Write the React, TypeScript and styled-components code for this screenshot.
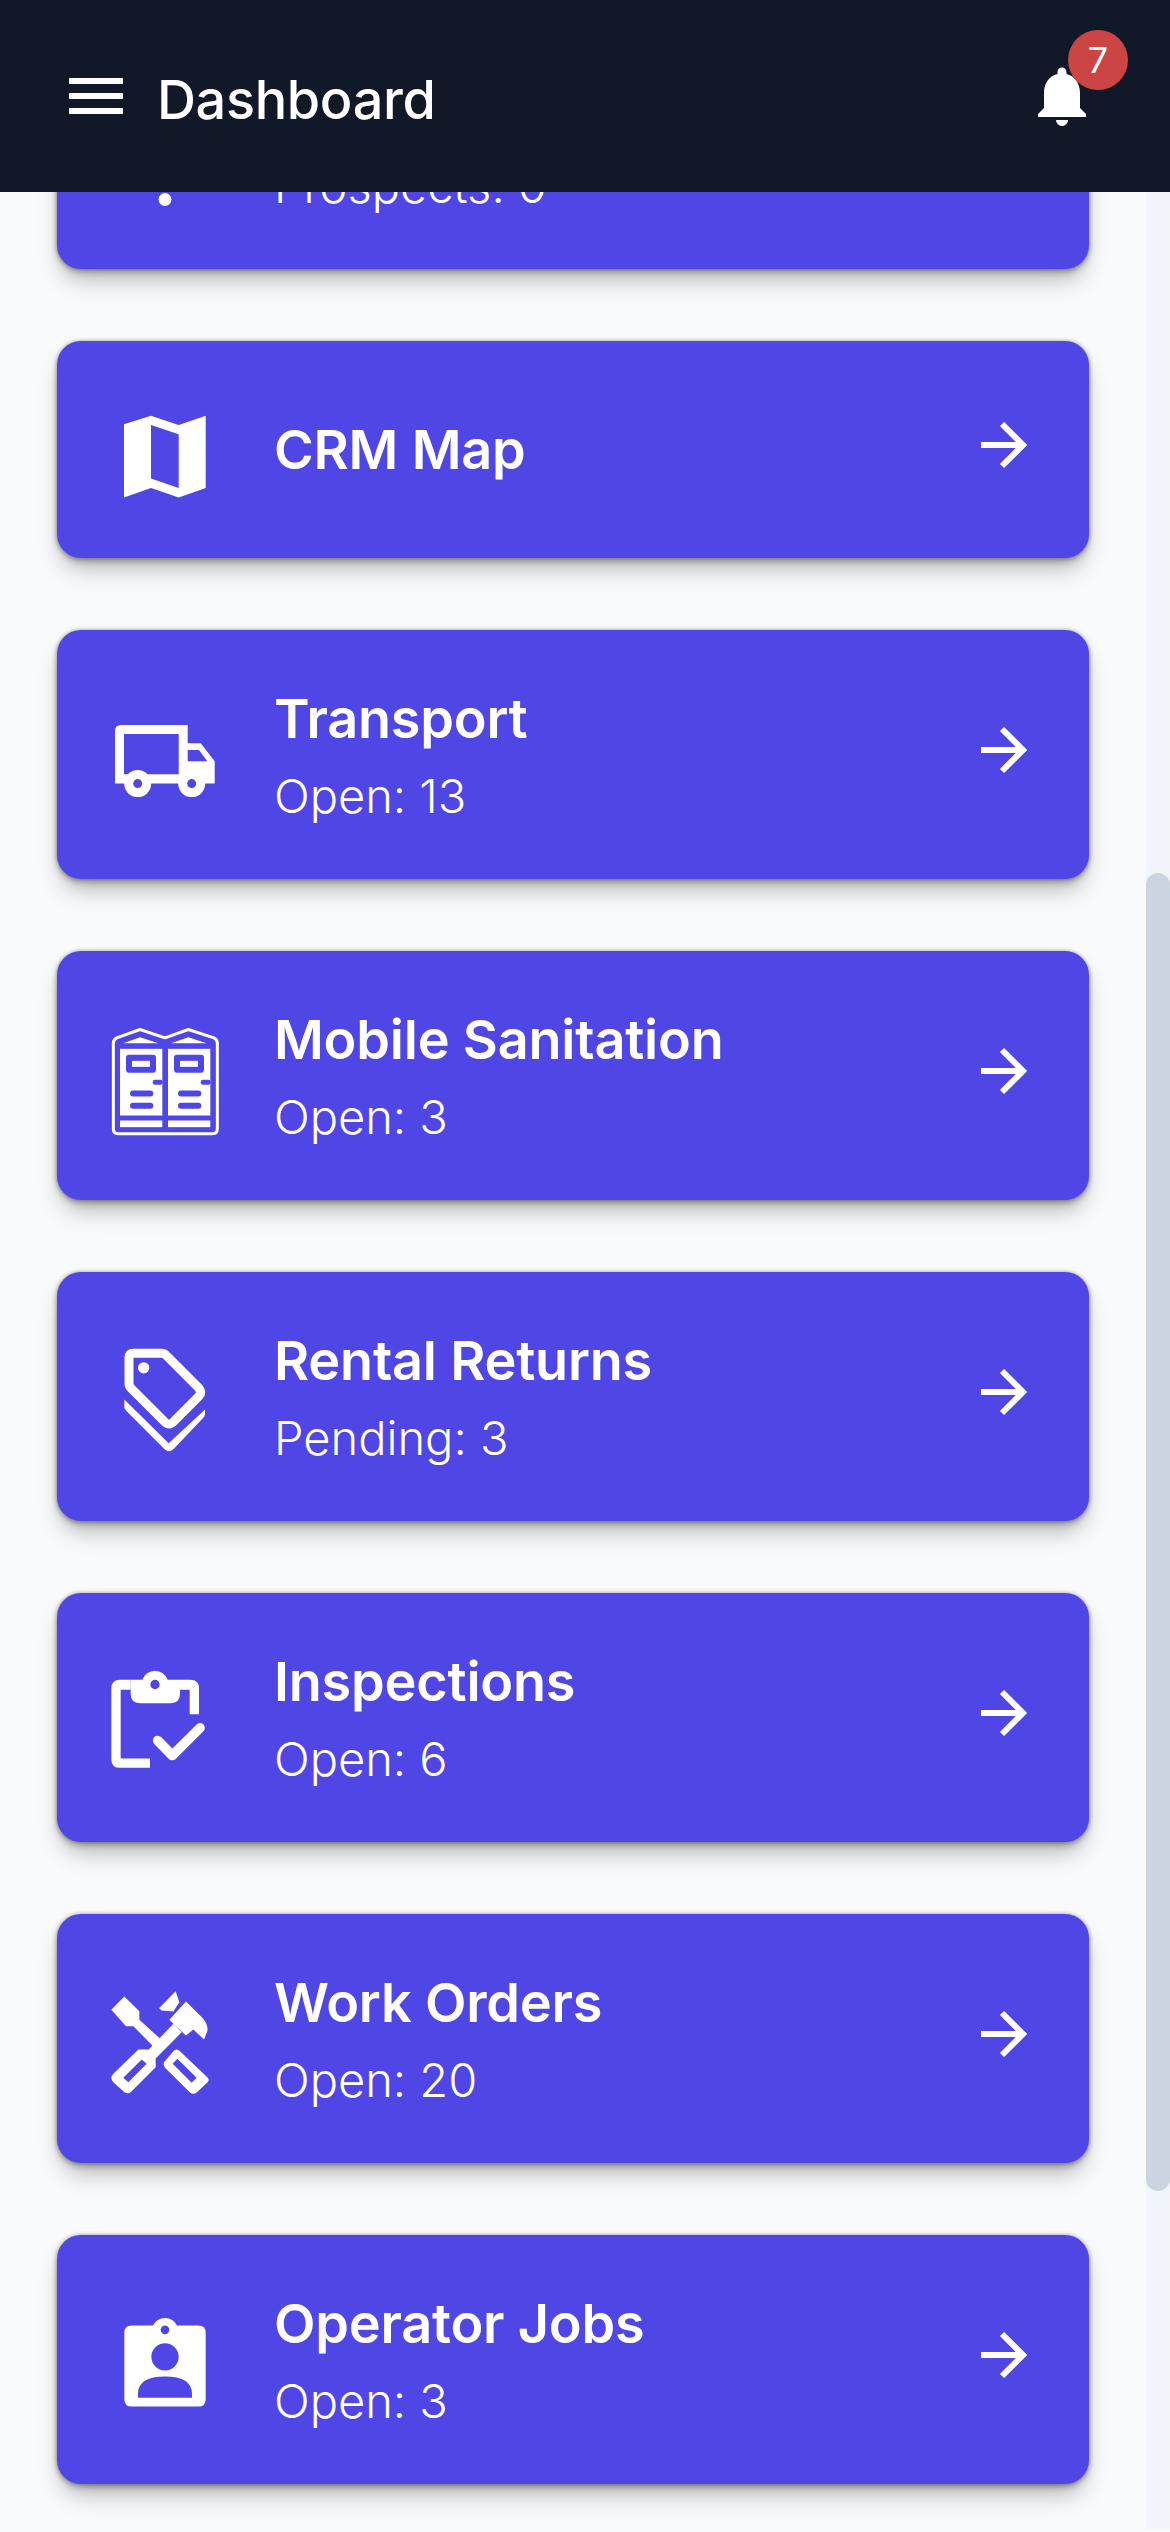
import React from "react";
import styled, { createGlobalStyle } from "styled-components";
import { ArrowRight } from "lucide-react";
import { MdNotifications } from "react-icons/md";

const CARD = "#4f46e5";

const GlobalStyle = createGlobalStyle`
 html, body {
  margin: 0;
  padding: 0;
  background: #f8fafc;
 }
 body {
  font-family: Inter, "Liberation Sans", sans-serif;
  color: #fff;
 }
`;

const Page = styled.div`
 width: 1170px;
 height: 2532px;
 overflow: hidden;
 background: #f8fafc;
`;

const Header = styled.header`
 position: relative;
 z-index: 2;
 height: 192px;
 background: #111827;
 display: flex;
 align-items: center;
 justify-content: space-between;
 padding: 0 72px 0 60px;
`;

const HeaderLeft = styled.div`
 display: flex;
 align-items: center;
 gap: 25px;
`;

const HeaderTitle = styled.h1`
 margin: 8px 0 0;
 font-size: 54px;
 line-height: 72px;
 font-weight: 500;
 letter-spacing: -0.35px;
`;

const MenuIcon = styled.svg`
 display: block;
 width: 72px;
 height: 72px;
`;

const BellWrap = styled.div`
 position: relative;
 width: 72px;
 height: 72px;
 svg {
  display: block;
 }
`;

const Badge = styled.span`
 position: absolute;
 top: -30px;
 left: 42px;
 width: 60px;
 height: 60px;
 border-radius: 50%;
 background: #cd4444;
 display: flex;
 align-items: center;
 justify-content: center;
 font-size: 36px;
 line-height: 1;
`;

const Body = styled.div`
 display: flex;
 height: 2337px;
 overflow: hidden;
`;

const List = styled.main`
 flex: 1;
 min-width: 0;
 display: flex;
 flex-direction: column;
 gap: 72px;
 padding: 0 57px;
 margin-top: -172px;
`;

const Card = styled.a`
 box-sizing: border-box;
 flex: none;
 min-height: 217px;
 display: flex;
 align-items: center;
 padding: 47.5px 51px 47.5px 48px;
 border-radius: 24px;
 background: ${CARD};
 box-shadow: 0 0 4px rgba(0, 0, 0, 0.3), 0 3px 6px rgba(0, 0, 0, 0.25),
  0 15px 24px -6px rgba(0, 0, 0, 0.3);
`;

const IconBox = styled.svg`
 display: block;
 flex: none;
 width: 120px;
 height: 120px;
 margin: 6px 0 -6px;
 fill: #fff;
`;

const CardText = styled.div`
 flex: 1;
 min-width: 0;
 margin-left: 49px;
`;

const CardTitle = styled.div`
 font-size: 54px;
 line-height: 82px;
 font-weight: 600;
 letter-spacing: -0.2px;
`;

const CardSub = styled.div`
 font-size: 47px;
 line-height: 72px;
 font-weight: 300;
`;

const Arrow = styled.div`
 flex: none;
 width: 72px;
 height: 72px;
 margin: -4.5px 0 4.5px;
 svg {
  display: block;
 }
`;

const Track = styled.div`
 flex: none;
 width: 24px;
 background: #f1f5f9;
`;

const Thumb = styled.div`
 width: 24px;
 height: 1318px;
 margin-top: 681px;
 border-radius: 12px;
 background: #cbd5e1;
`;

const DotIcon = () => (
 <IconBox viewBox="0 0 120 120">
  <circle cx="60" cy="108.5" r="6.5" />
 </IconBox>
);

const MapIcon = () => (
 <IconBox viewBox="0 0 120 120">
  <path
   fillRule="evenodd"
   d="M19 28.3 46 19.7 73.7 29 100.7 19.7V92L73.7 101.4 46 92 19 101.4ZM46 29V82.4L73.7 92V38.3Z"
  />
 </IconBox>
);

const TruckIcon = () => (
 <IconBox viewBox="0 0 120 120">
  <path
   fillRule="evenodd"
   d="M16 24H82.7V42.3H95.7L109.7 60.2V82.6H10V30Q10 24 16 24ZM19 33V73.3H73.7V33ZM82.7 49V60.2H102.3L94 49Z"
  />
  <circle cx="32.7" cy="82.6" r="13.5" />
  <circle cx="86.7" cy="82.6" r="13.5" />
  <circle cx="32.7" cy="82.6" r="4.5" fill={CARD} />
  <circle cx="86.7" cy="82.6" r="4.5" fill={CARD} />
 </IconBox>
);

const ToiletIcon = () => (
 <IconBox viewBox="45 64.5 360 360">
  <path
   fill="none"
   stroke="#fff"
   strokeWidth="9"
   strokeLinejoin="round"
   d="M80 112 150 87 225 112 295 87 372 112Q382 117 382 128V385Q382 400 367 400H85Q70 400 70 385V128Q70 117 80 112Z"
  />
  <path d="M100 128 150 110 205 128ZM243 128 295 110 350 128Z" />
  {[0, 144].map((x) => (
   <g key={x} transform={`translate(${x} 0)`}>
    <rect x="90" y="145" width="127" height="200" />
    <rect x="90" y="360" width="127" height="20" />
    <rect x="108" y="163" width="90" height="54" rx="9" fill={CARD} />
    <rect x="126" y="181" width="54" height="18" />
    <rect x="188" y="238" width="30" height="15" rx="7" fill={CARD} />
    <rect x="120" y="270" width="70" height="18" rx="9" fill={CARD} />
    <rect x="120" y="307" width="70" height="18" rx="9" fill={CARD} />
   </g>
  ))}
 </IconBox>
);

const TagIcon = () => (
 <IconBox viewBox="45 97.5 360 360">
  <path
   fill="none"
   stroke="#fff"
   strokeWidth="27"
   d="M130 128H215Q222 128 228 134L326 232Q338 245 326 258L250 334Q237 347 224 334L125 235Q117 227 117 218V141Q117 128 130 128Z"
  />
  <circle cx="161" cy="172" r="17" />
  <path d="M103 267 236 398 345 297V310Q345 318 340 322L250 416Q237 428 224 416L110 302Q103 295 103 290Z" />
 </IconBox>
);

const ClipboardIcon = () => (
 <IconBox viewBox="45 70.5 360 360">
  <path d="M180 382H90Q64 382 64 356V144Q64 118 90 118H122V148H92V354H180Z" />
  <path d="M270 118H301Q327 118 327 144V221H299V148H270Z" />
  <path
   fillRule="evenodd"
   d="M122 118H157A40 40 0 0 1 233 118H270V160Q270 188 242 188H150Q122 188 122 160ZM195 118A14 14 0 1 0 195 146 14 14 0 1 0 195 118Z"
  />
  <path
   d="M203 300 247 345 330 262"
   fill="none"
   stroke="#fff"
   strokeWidth="29"
   strokeLinecap="round"
   strokeLinejoin="round"
  />
 </IconBox>
);

const ToolsIcon = () => (
 <IconBox viewBox="45 73.5 360 360">
  <path d="M64 148 103 108 148 152V178L211 235 190 258 130 197H108Z" />
  <path
   fillRule="evenodd"
   d="M222 305 250 272Q260 262 270 272L352 350Q360 358 352 366L320 396Q310 404 300 396L228 325Q218 315 222 305ZM262 295 248 310 305 367 320 352Z"
  />
  <path
   fillRule="evenodd"
   d="M145 267H176L250 190 275 215 197 294V320L125 392Q112 405 100 392L70 365Q58 352 70 340ZM155 297 100 352 115 365 170 310Z"
  />
  <path d="M238 178 288 123 340 175Q355 195 352 212L342 237 310 207 288 225 250 190Z" />
  <path d="M207 143 257 92 268 125 250 153 215 150Z" />
 </IconBox>
);

const BadgeIcon = () => (
 <IconBox viewBox="45 76.5 360 360">
  <path
   fillRule="evenodd"
   d="M125 135H189A40 40 0 0 1 261 135H325Q347 135 347 157V356Q347 378 325 378H125Q103 378 103 356V157Q103 135 125 135ZM225 135A13 13 0 1 0 225 161 13 13 0 1 0 225 135ZM225 188A41 41 0 1 0 225 270 41 41 0 1 0 225 188ZM144 352H306V340Q306 288 225 288 144 288 144 340Z"
  />
 </IconBox>
);

const items = [
 { title: "CRM", sub: "Prospects: 0", Icon: DotIcon },
 { title: "CRM Map", Icon: MapIcon },
 { title: "Transport", sub: "Open: 13", Icon: TruckIcon },
 { title: "Mobile Sanitation", sub: "Open: 3", Icon: ToiletIcon },
 { title: "Rental Returns", sub: "Pending: 3", Icon: TagIcon },
 { title: "Inspections", sub: "Open: 6", Icon: ClipboardIcon },
 { title: "Work Orders", sub: "Open: 20", Icon: ToolsIcon },
 { title: "Operator Jobs", sub: "Open: 3", Icon: BadgeIcon },
];

export default function App() {
 return (
  <Page>
   <GlobalStyle />
   <Header>
    <HeaderLeft>
     <MenuIcon viewBox="0 0 72 72" aria-hidden="true">
      <path d="M9 21H63M9 36H63M9 51H63" stroke="#fff" strokeWidth="6" />
     </MenuIcon>
     <HeaderTitle>Dashboard</HeaderTitle>
    </HeaderLeft>
    <BellWrap>
     <MdNotifications size={72} color="#fff" />
     <Badge>7</Badge>
    </BellWrap>
   </Header>
   <Body>
    <List>
     {items.map(({ title, sub, Icon }) => (
      <Card key={title}>
       <Icon />
       <CardText>
        <CardTitle>{title}</CardTitle>
        {sub && <CardSub>{sub}</CardSub>}
       </CardText>
       <Arrow>
        <ArrowRight
         size={72}
         color="#fff"
         strokeWidth={2}
         strokeLinecap="butt"
         strokeLinejoin="miter"
        />
       </Arrow>
      </Card>
     ))}
    </List>
    <Track>
     <Thumb />
    </Track>
   </Body>
  </Page>
 );
}
